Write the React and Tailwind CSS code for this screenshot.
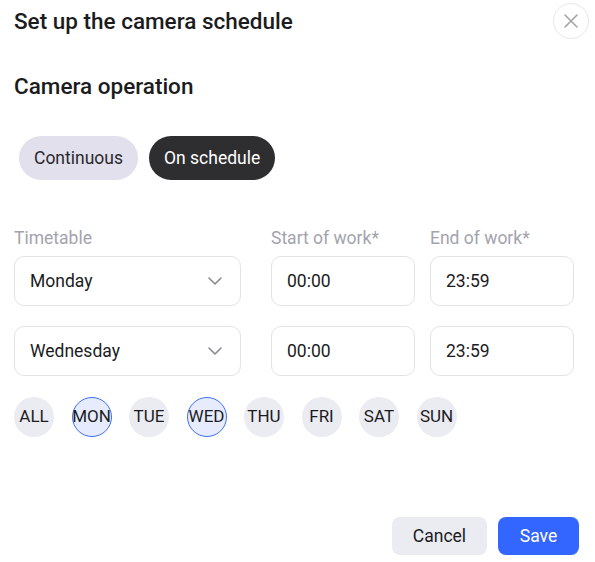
import React from "react";

const days = [
  { label: "ALL", on: false },
  { label: "MON", on: true },
  { label: "TUE", on: false },
  { label: "WED", on: true },
  { label: "THU", on: false },
  { label: "FRI", on: false },
  { label: "SAT", on: false },
  { label: "SUN", on: false },
];

const rows = [
  { day: "Monday", start: "00:00", end: "23:59" },
  { day: "Wednesday", start: "00:00", end: "23:59" },
];

function Chevron() {
  return (
    <svg width="14" height="8" viewBox="0 0 14 8" fill="none">
      <path d="M1 1l6 6 6-6" stroke="#8a8a8f" strokeWidth="1.6" strokeLinecap="round" strokeLinejoin="round" />
    </svg>
  );
}

export default function App() {
  return (
    <div
      className="w-[595px] h-[562px] bg-white relative text-[#1c1c1e]"
      style={{ fontFamily: "Roboto, 'Liberation Sans', sans-serif" }}
    >
      <div className="flex items-center justify-between pl-[14px] pr-[6px] pt-[3px]">
        <h1 className="text-[22.5px] font-medium leading-[36px]">Set up the camera schedule</h1>
        <button className="w-[36px] h-[36px] rounded-full border border-[#e6e6ec] flex items-center justify-center">
          <svg width="16" height="16" viewBox="0 0 16 16" fill="none">
            <path d="M2 2l12 12M14 2L2 14" stroke="#a3a3a8" strokeWidth="1.6" strokeLinecap="round" />
          </svg>
        </button>
      </div>

      <h2 className="pl-[14px] mt-[32px] text-[22.5px] font-medium leading-[30px]">Camera operation</h2>

      <div className="flex gap-[11px] pl-[19px] mt-[35px]">
        <button className="h-[44px] px-[15px] rounded-full bg-[#e1e0ec] text-[17.5px] text-[#2a2a2e]">Continuous</button>
        <button className="h-[44px] px-[15px] rounded-full bg-[#2e2e30] text-[17.5px] text-white">On schedule</button>
      </div>

      <div className="pl-[14px] mt-[48px] flex flex-col gap-[20px]">
        {rows.map((r, i) => (
          <div key={i} className="flex flex-col">
            {i === 0 && (
              <div className="flex text-[17.5px] text-[#a3a3ad] leading-[20px] mb-[8px]">
                <div className="w-[257px]">Timetable</div>
                <div className="w-[159px]">Start of work*</div>
                <div>End of work*</div>
              </div>
            )}
            <div className="flex">
              <div className="w-[227px] h-[50px] rounded-[10px] border border-[#e3e3e6] flex items-center justify-between pl-[15px] pr-[18px] text-[17.5px]">
                <span>{r.day}</span>
                <Chevron />
              </div>
              <div className="ml-[30px] w-[144px] h-[50px] rounded-[10px] border border-[#e3e3e6] flex items-center pl-[15px] text-[17.5px]">
                {r.start}
              </div>
              <div className="ml-[15px] w-[144px] h-[50px] rounded-[10px] border border-[#e3e3e6] flex items-center pl-[15px] text-[17.5px]">
                {r.end}
              </div>
            </div>
          </div>
        ))}
      </div>

      <div className="flex gap-[17.5px] pl-[14px] mt-[21px]">
        {days.map((d) => (
          <div
            key={d.label}
            className={
              d.on
                ? "w-[40px] h-[40px] rounded-full bg-[#e6ecfd] border border-[#3d6ff5] flex items-center justify-center text-[17px] text-[#1c1c1e]"
                : "w-[40px] h-[40px] rounded-full bg-[#ebebf2] flex items-center justify-center text-[17px] text-[#1c1c1e]"
            }
          >
            {d.label}
          </div>
        ))}
      </div>

      <div className="absolute right-[16px] bottom-[7px] flex gap-[11px]">
        <button className="h-[38px] w-[95px] rounded-[8px] bg-[#ebebf2] text-[17.5px] text-[#1c1c1e]">Cancel</button>
        <button className="h-[38px] w-[81px] rounded-[8px] bg-[#3366ff] text-[17.5px] text-white">Save</button>
      </div>
    </div>
  );
}
